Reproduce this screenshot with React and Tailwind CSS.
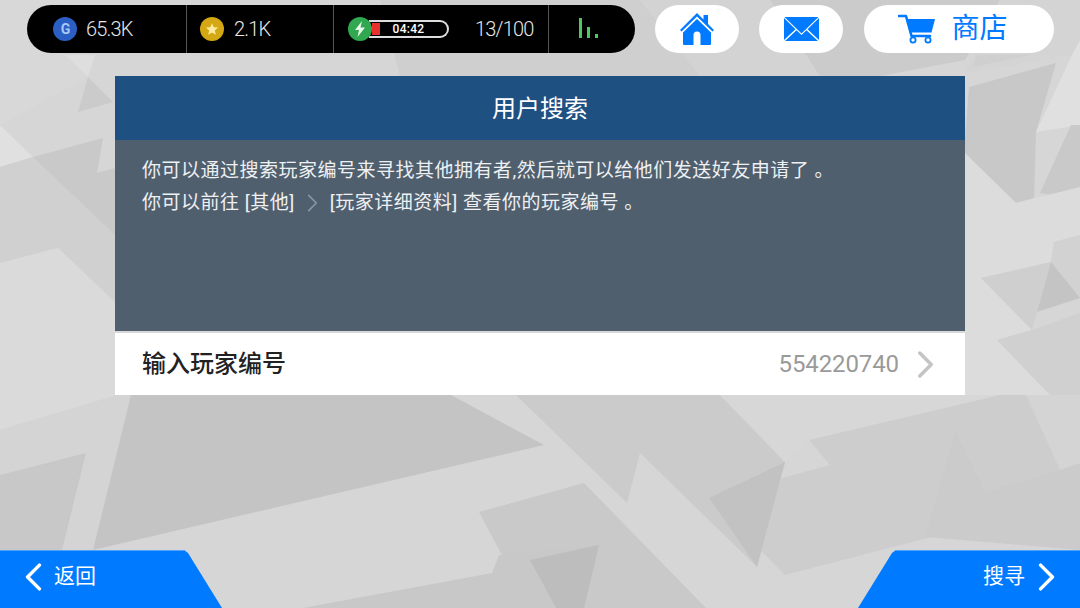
const Home = () => (
  <svg width="36" height="34" viewBox="0 0 36 34">
    <path d="M18 1 L1 18 L2.5 19.5 L18 4.5 L33.5 19.5 L35 18 L29 12 V3 H24.5 V7.5 Z" fill="#007aff" />
    <path fillRule="evenodd" d="M18 7 L32 20.5 V32 Q32 33 31 33 H5 Q4 33 4 32 V20.5 Z M14.5 33 H21.5 V23 Q21.5 19.5 18 19.5 Q14.5 19.5 14.5 23 Z" fill="#007aff" />
  </svg>
);
const Mail = () => (
  <svg width="35" height="24" viewBox="0 0 35 24">
    <path d="M0.5 0 H34.5 L17.5 16.5 Z" fill="#007aff" />
    <path d="M0 1 L11.5 12.3 L0 23 Z M35 1 L23.5 12.3 L35 23 Z" fill="#007aff" />
    <path d="M1 24 L12.5 13.3 L17.5 18 L22.5 13.3 L34 24 Z" fill="#007aff" />
  </svg>
);
const Cart = () => (
  <svg width="38" height="30" viewBox="0 0 38 30">
    <path d="M1 2 H8 L13.5 22 H32" fill="none" stroke="#007aff" strokeWidth="2.6" strokeLinecap="round" strokeLinejoin="round" />
    <path d="M9.5 5 H37 L33.5 18.5 H13 Z" fill="#007aff" />
    <circle cx="15" cy="26" r="2.6" fill="none" stroke="#007aff" strokeWidth="1.8" />
    <circle cx="30" cy="26" r="2.6" fill="none" stroke="#007aff" strokeWidth="1.8" />
  </svg>
);
const Chevron = ({ dir = "right", color = "#fff", w = 16, h = 26, sw = 3.4 }) => (
  <svg width={w} height={h} viewBox="0 0 16 26">
    <path d={dir === "right" ? "M2.5 2 L13.5 13 L2.5 24" : "M13.5 2 L2.5 13 L13.5 24"} fill="none" stroke={color} strokeWidth={sw} strokeLinecap="round" strokeLinejoin="round" />
  </svg>
);
const Star = () => (
  <svg width="14" height="14" viewBox="0 0 24 24"><path d="M12 2 L15 9 L22.5 9.6 L16.8 14.5 L18.6 22 L12 18 L5.4 22 L7.2 14.5 L1.5 9.6 L9 9 Z" fill="#fbeaa0" /></svg>
);
const Bolt = () => (
  <svg width="12" height="16" viewBox="0 0 12 16"><path d="M8 0 L1 9 H5 L3.5 16 L11 6.5 H6.5 Z" fill="#e8f7ea" /></svg>
);

const bg = [
  ["0,0 1080,0 1080,608 0,608", "#d6d6d6"],
  ["0,0 70,0 65,55 95,55 88,77 0,125", "#d8d8d8"],
  ["65,55 95,55 88,77", "#dedede"],
  ["88,77 78,112 113,102", "#cbcbcb"],
  ["0,125 33,157 0,167", "#e0e0e0"],
  ["0,167 33,157 115,235 115,302 58,248 0,263", "#d0d0d0"],
  ["33,157 103,138 97,173 115,168 115,235", "#c9c9c9"],
  ["0,263 58,248 115,302 115,395 0,395", "#dadada"],
  ["380,0 640,0 700,76 400,76", "#cfcfcf"],
  ["640,0 770,0 840,76 700,76", "#d3d3d3"],
  ["770,0 1000,0 965,60 880,76 820,76", "#cbcbcb"],
  ["1000,0 1080,0 1080,57 1071,55 964,73", "#d4d4d4"],
  ["972,67 977,55 1030,55", "#cfcfcf"],
  ["969,87 1056,63 1036,132 1034,198 1016,203 964,153", "#c8c8c8"],
  ["1071,57 1080,40 1080,125 1036,132", "#e0e0e0"],
  ["1071,125 1080,125 1080,187 1052,195 1040,193", "#c9c9c9"],
  ["965,153 1016,203 1080,187 1080,235 1054,242 1051,262 981,278 1032,330 997,340 1050,395 965,395", "#dcdcdc"],
  ["1054,242 1080,235 1080,298 1051,262", "#d2d2d2"],
  ["981,278 1051,262 1037,312 1032,330", "#cfcfcf"],
  ["1051,262 1080,298 1037,312", "#c4c4c4"],
  ["997,340 1032,330 1080,313 1080,395 1050,395", "#d0d0d0"],

  ["0,430 117,395 0,395", "#dadada"],
  ["0,430 117,395 131,395 93,550 0,550", "#d4d4d4"],
  ["86,453 0,475 0,550 62,550", "#c8c8c8"],
  ["131,395 451,395 544,445 93,550", "#c4c4c4"],
  ["516,395 720,395 785,462 757,567 640,453 627,503", "#cbcbcb"],
  ["720,395 1000,395 830,465 809,440 785,462", "#d7d7d7"],
  ["830,465 809,440 1000,395 1026,395 1080,470 1080,463 975,495 997,520 785,575 709,498", "#cdcdcd"],
  ["709,498 785,462 757,567", "#c2c2c2"],
  ["956,433 926,537 997,520", "#c4c4c4"],
  ["956,433 997,520 975,495 1080,463 1080,550 926,537", "#cbcbcb"],
  ["1026,395 1080,395 1080,463 1060,470", "#d4d4d4"],
  ["479,512 584,483 706,608 530,608", "#c9c9c9"],
  ["599,545 584,608 303,608 492,573 499,555", "#c8c8c8"],
  ["599,545 584,608 556,608 530,560", "#bdbdbd"],
];

export default function App() {
  const sans = "font-['Roboto','Noto_Sans_CJK_SC',sans-serif]";
  return (
    <div className={`relative w-[1080px] h-[608px] overflow-hidden flex flex-col bg-[#d6d6d6] ${sans}`}>
      <svg className="absolute inset-0" width="1080" height="608" viewBox="0 0 1080 608">
        {bg.map(([p, c], i) => <polygon key={i} points={p} fill={c} />)}
      </svg>

      <header className="relative flex items-center h-[48px] mt-[5px] ml-[27px]">
        <div className="flex items-center w-[608px] h-[48px] rounded-full bg-black text-[#e6e6e6] text-[20px] tracking-[-0.8px] font-light">
          <div className="flex items-center w-[160px] h-full pl-[26px] border-r border-[#555]">
            <span className="flex items-center justify-center w-[24px] h-[24px] rounded-full bg-[#2b5fc4] text-[#a8c8f5] text-[14px] font-bold">G</span>
            <span className="ml-[9px]">65.3K</span>
          </div>
          <div className="flex items-center w-[147px] h-full pl-[13px] border-r border-[#555]">
            <span className="flex items-center justify-center w-[24px] h-[24px] rounded-full bg-[#d4a813]"><Star /></span>
            <span className="ml-[10px]">2.1K</span>
          </div>
          <div className="flex items-center w-[215px] h-full pl-[14px] border-r border-[#555]">
            <div className="relative flex items-center">
              <span className="relative z-10 flex items-center justify-center w-[24px] h-[24px] rounded-full bg-[#2fa84f]"><Bolt /></span>
              <div className="relative -ml-[3px] w-[80px] h-[18px] rounded-r-full border-2 border-l-0 border-[#ddd] flex items-center justify-center">
                <span className="absolute left-[3px] top-[1px] w-[8px] h-[12px] bg-[#e8302c]" />
                <span className="ml-[1px] text-[12px] font-medium text-white tracking-[0.3px]">04:42</span>
              </div>
            </div>
            <span className="ml-[26px]">13/100</span>
          </div>
          <div className="flex items-end gap-[5px] h-[20px] ml-[30px] mb-[2px]">
            <span className="w-[3px] h-[20px] bg-[#4fc95f]" />
            <span className="w-[3px] h-[11px] bg-[#4fc95f]" />
            <span className="w-[3px] h-[4px] bg-[#4fc95f]" />
          </div>
        </div>
        <button className="flex items-center justify-center w-[84px] h-[48px] ml-[20px] rounded-full bg-white"><Home /></button>
        <button className="flex items-center justify-center w-[84px] h-[48px] ml-[20px] rounded-full bg-white"><Mail /></button>
        <button className="flex items-center justify-center w-[190px] h-[48px] ml-[21px] rounded-full bg-white text-[#007aff] text-[28px]">
          <Cart />
          <span className="ml-[15px] mr-[12px]">商店</span>
        </button>
      </header>

      <main className="relative w-[850px] ml-[115px] mt-[23px] flex flex-col">
        <div className="flex items-center justify-center h-[64px] pt-[1px] bg-[#1f5082] text-white text-[24px]">用户搜索</div>
        <div className="h-[191px] bg-[#505f6e] px-[27px] pt-[15px] text-[#eef0f2] text-[19px] leading-[32px] tracking-[0.5px]">
          <p>你可以通过搜索玩家编号来寻找其他拥有者,然后就可以给他们发送好友申请了 。</p>
          <p className="flex items-center">
            你可以前往 [其他]
            <span className="mx-[11px] flex"><Chevron color="#8b96a2" w={13} h={18} sw={2.4} /></span>
            [玩家详细资料] 查看你的玩家编号 。
          </p>
        </div>
        <div className="flex items-center h-[64px] bg-white border-t-2 border-[#d8d8d8] pl-[27px] pr-[31px]">
          <span className="text-[#222] text-[24px] font-medium">输入玩家编号</span>
          <span className="ml-auto text-[#9a9a9a] text-[24px] tracking-[-0.1px]">554220740</span>
          <span className="ml-[18px] flex"><Chevron color="#c4c4c4" w={17} h={27} /></span>
        </div>
      </main>

      <footer className="relative mt-auto flex justify-between h-[58px]">
        <button className="flex items-center w-[222px] h-full pl-[24px] pb-[5px] bg-[#007aff] border-t border-[#4da3ff] text-white text-[21px] [clip-path:polygon(0_0,184px_0,188px_3px,222px_58px,0_58px)]">
          <Chevron dir="left" w={19} h={28} sw={3.2} />
          <span className="ml-[11px]">返回</span>
        </button>
        <button className="flex items-center justify-end w-[222px] h-full pr-[24px] pb-[5px] bg-[#007aff] border-t border-[#4da3ff] text-white text-[21px] [clip-path:polygon(34px_3px,38px_0,222px_0,222px_58px,0_58px)]">
          <span className="mr-[12px]">搜寻</span>
          <Chevron dir="right" w={19} h={28} sw={3.2} />
        </button>
      </footer>
    </div>
  );
}
